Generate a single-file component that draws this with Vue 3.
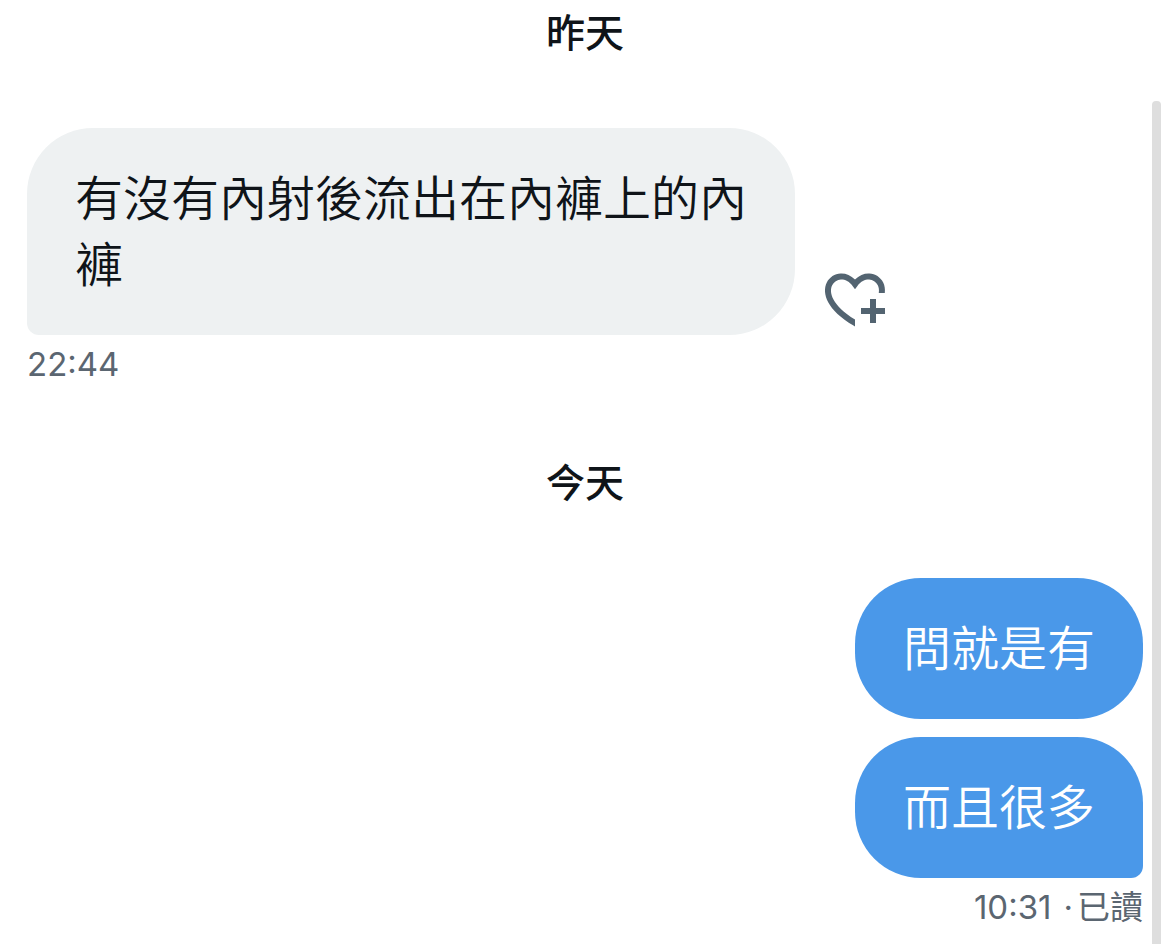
<script setup>
import { ref } from 'vue';

// Messages grouped by day, in the order they were sent
const days = ref([
  {
    label: '昨天',
    own: false,
    messages: ['有沒有內射後流出在內褲上的內褲'],
    time: '22:44',
    status: '',
  },
  {
    label: '今天',
    own: true,
    messages: ['問就是有', '而且很多'],
    time: '10:31',
    status: '已讀',
  },
]);
</script>

<template>
  <main class="chat">
    <section v-for="day in days" :key="day.label" class="day">
      <h2 class="day-label">{{ day.label }}</h2>

      <div class="group" :class="{ own: day.own }">
        <div v-for="message in day.messages" :key="message" class="row">
          <p class="bubble">{{ message }}</p>
          <button v-if="!day.own" type="button" class="react" aria-label="心情">
            <svg viewBox="0 0 24 24" aria-hidden="true">
              <path d="M17 12v3h-2.998v2h3v3h2v-3h3v-2h-3.001v-3H17zm-5 6.839c-3.871-2.34-6.053-4.639-7.127-6.609-1.112-2.04-1.031-3.7-.479-4.82.561-1.13 1.667-1.84 2.91-1.91 1.222-.06 2.68.51 3.892 2.16l.806 1.09.805-1.09c1.211-1.65 2.668-2.22 3.89-2.16 1.242.07 2.347.78 2.908 1.91.334.677.49 1.554.321 2.59h2.011c.153-1.283-.039-2.469-.539-3.48-.887-1.79-2.647-2.91-4.601-3.01-1.65-.09-3.367.56-4.796 2.01-1.43-1.45-3.147-2.1-4.798-2.01-1.954.1-3.714 1.22-4.601 3.01-.896 1.81-.846 4.17.514 6.67 1.353 2.48 4.003 5.12 8.382 7.67l.502.299v-2.32z" />
            </svg>
          </button>
        </div>

        <div class="meta">
          <time>{{ day.time }}</time>
          <template v-if="day.status">
            <span class="dot">·</span>
            <span>{{ day.status }}</span>
          </template>
        </div>
      </div>
    </section>

    <div class="scrollbar"></div>
  </main>
</template>

<style>
body {
  margin: 0;
  background: #fff;
}
</style>

<style scoped>
.chat {
  position: relative;
  box-sizing: border-box;
  min-height: 100vh;
  padding: 9px 27px 0;
  overflow: hidden;
  color: #0f1419;
  font-family: Inter, "Noto Sans CJK TC", sans-serif;
}

.day-label {
  margin: 0 0 71px;
  font-size: 39px;
  font-weight: 500;
  line-height: 48px;
  text-align: center;
}

.day + .day .day-label {
  margin-top: 74px;
}

.group {
  display: flex;
  flex-direction: column;
  align-items: flex-start;
}

.group.own {
  align-items: flex-end;
}

.row {
  display: flex;
  align-items: flex-end;
  gap: 24px;
}

.row + .row {
  margin-top: 18px;
}

.bubble {
  box-sizing: border-box;
  max-width: 16em;
  margin: 0;
  padding: 38px 48px 37px;
  border-radius: 66px;
  background: #eef1f2;
  font-size: 48px;
  font-weight: 350;
  line-height: 66px;
}

.own .bubble {
  background: #4a98e9;
  color: #fff;
}

/* The last bubble of a group has a squared corner next to the time */
.group .row:nth-last-child(2) .bubble {
  border-bottom-left-radius: 12px;
}

.group.own .row:nth-last-child(2) .bubble {
  border-bottom-left-radius: 66px;
  border-bottom-right-radius: 12px;
}

.react {
  display: flex;
  padding: 0;
  border: none;
  background: none;
  cursor: pointer;
}

.react svg {
  width: 72px;
  height: 72px;
  fill: #536471;
}

.meta {
  display: flex;
  margin-top: 8px;
  color: #5b6671;
  font-size: 33px;
  line-height: 42px;
}

.dot {
  margin: 0 4px 0 12px;
}

.scrollbar {
  position: absolute;
  top: 101px;
  right: 9px;
  bottom: 0;
  width: 9px;
  border-radius: 4px 4px 0 0;
  background: #dedede;
}
</style>
